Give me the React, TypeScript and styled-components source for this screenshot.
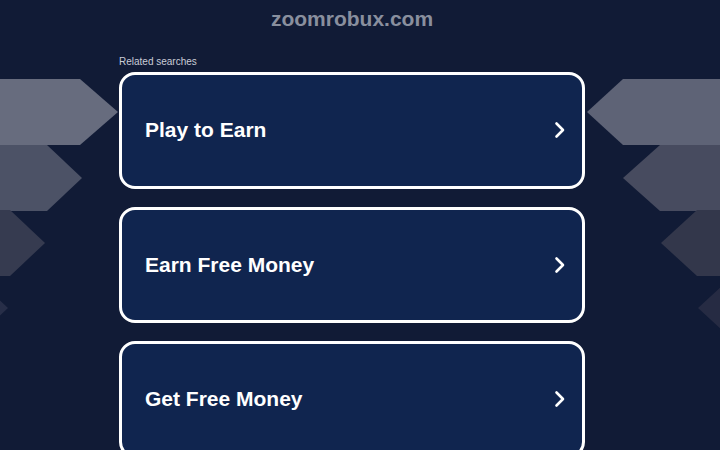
import React from "react";
import styled, { createGlobalStyle } from "styled-components";

const GlobalStyle = createGlobalStyle`
  html, body {
    margin: 0;
    padding: 0;
    background: #111b36;
    overflow: hidden;
  }
  body {
    font-family: "Liberation Sans", Arial, sans-serif;
  }
`;

const Page = styled.div`
  position: relative;
  width: 720px;
  height: 450px;
  overflow: hidden;
  background: #111b36;
`;

const Decor = styled.svg`
  position: absolute;
  top: 0;
  left: 0;
  width: 720px;
  height: 450px;
  z-index: 0;
`;

const Content = styled.main`
  position: relative;
  z-index: 1;
  width: 466px;
  margin: 0 0 0 119px;
  display: flex;
  flex-direction: column;
`;

const Domain = styled.h1`
  margin: 0;
  padding-top: 7px;
  height: 24px;
  line-height: 24px;
  text-align: center;
  font-size: 21px;
  font-weight: bold;
  color: #898f9e;
`;

const Label = styled.div`
  margin-top: 24px;
  height: 14px;
  line-height: 14px;
  font-size: 10px;
  color: #c9ccd6;
`;

const List = styled.div`
  margin-top: 3px;
  display: flex;
  flex-direction: column;
  gap: 18px;
`;

const Card = styled.a`
  box-sizing: border-box;
  height: 116.5px;
  display: flex;
  align-items: center;
  justify-content: space-between;
  padding: 0 15px 0 23px;
  border: 3px solid #ffffff;
  border-radius: 16px;
  background: #10254f;
  color: #ffffff;
  text-decoration: none;
  cursor: pointer;
`;

const CardTitle = styled.span`
  font-size: 21px;
  font-weight: bold;
`;

const Chevron = () => (
  <svg width="14" height="18" viewBox="0 0 14 18">
    <path
      d="M3.5 2.5 L10 9 L3.5 15.5"
      fill="none"
      stroke="#ffffff"
      strokeWidth="2.6"
      strokeLinecap="round"
      strokeLinejoin="round"
    />
  </svg>
);

const leftBands = [
  { y: 79, rect: 80, tip: 118, color: "#676c7e" },
  { y: 145, rect: 47, tip: 82, color: "#4c5266" },
  { y: 210, rect: 10, tip: 45, color: "#363b50" },
  { y: 275, rect: -27, tip: 8, color: "#272e48" },
];

const rightBands = [
  { y: 79, rect: 623, tip: 587, color: "#5e6376" },
  { y: 145, rect: 660, tip: 623, color: "#474b5f" },
  { y: 210, rect: 697, tip: 661, color: "#33374b" },
  { y: 275, rect: 734, tip: 698, color: "#262b43" },
];

const items = ["Play to Earn", "Earn Free Money", "Get Free Money"];

export default function App() {
  return (
    <Page>
      <GlobalStyle />
      <Decor viewBox="0 0 720 450">
        {leftBands.map((b) => (
          <polygon
            key={"l" + b.y}
            fill={b.color}
            points={`0,${b.y} ${b.rect},${b.y} ${b.tip},${b.y + 33} ${b.rect},${b.y + 66} 0,${b.y + 66}`}
          />
        ))}
        {rightBands.map((b) => (
          <polygon
            key={"r" + b.y}
            fill={b.color}
            points={`720,${b.y} ${b.rect},${b.y} ${b.tip},${b.y + 33} ${b.rect},${b.y + 66} 720,${b.y + 66}`}
          />
        ))}
      </Decor>
      <Content>
        <Domain>zoomrobux.com</Domain>
        <Label>Related searches</Label>
        <List>
          {items.map((t) => (
            <Card key={t}>
              <CardTitle>{t}</CardTitle>
              <Chevron />
            </Card>
          ))}
        </List>
      </Content>
    </Page>
  );
}
